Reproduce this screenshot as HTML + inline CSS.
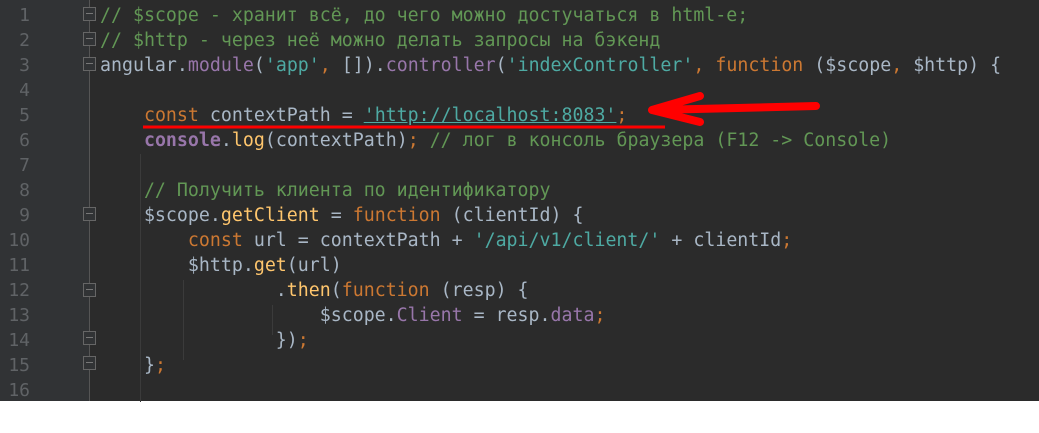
<!DOCTYPE html>
<html><head><meta charset="utf-8"><style>
body{margin:0;width:1039px;height:433px;background:#fff;overflow:hidden;position:relative}
#ed{position:absolute;left:0;top:0;width:1039px;height:401px;background:#2b2b2b}
#gut{position:absolute;left:0;top:0;width:89px;height:401px;background:#313335}
.gl{position:absolute;left:89px;top:0;width:1px;height:401px;background:#555}
.n{position:absolute;left:0;width:30px;text-align:right;color:#606366;font:18px "DejaVu Sans Mono",monospace}
.l{position:absolute;left:100px;white-space:pre;font:18.25px "DejaVu Sans Mono","Liberation Mono",monospace;color:#a9b7c6}
.c{color:#629755}.k{color:#cc7832}.s{color:#4eaaa3}.m{color:#9876aa}.f{color:#ffc66d}
.ig{position:absolute;width:1px;background:#3b3b3b}
.fold{position:absolute;left:83px;width:13px;height:14px;border:1px solid #666;box-sizing:border-box;background:#313335}
.fold:after{content:"";position:absolute;left:2px;top:5px;width:7px;height:1px;background:#777}
</style></head><body>
<div id="ed"></div><div id="gut"></div><div class="gl"></div>
<div class="ig" style="left:140px;top:154px;height:248px"></div>
<div class="ig" style="left:183px;top:280px;height:80px"></div>
<div class="ig" style="left:272px;top:305px;height:30px"></div>
<div class="fold" style="top:7px"></div><div class="fold" style="top:32px"></div><div class="fold" style="top:57px"></div>
<div class="fold" style="top:207px"></div><div class="fold" style="top:283px"></div><div class="fold" style="top:331px"></div><div class="fold" style="top:356px"></div>
<div class="n" style="top:5px">1</div><div class="n" style="top:30px">2</div><div class="n" style="top:55px">3</div><div class="n" style="top:80px">4</div><div class="n" style="top:105px">5</div><div class="n" style="top:130px">6</div><div class="n" style="top:155px">7</div><div class="n" style="top:180px">8</div><div class="n" style="top:205px">9</div><div class="n" style="top:230px">10</div><div class="n" style="top:255px">11</div><div class="n" style="top:280px">12</div><div class="n" style="top:305px">13</div><div class="n" style="top:330px">14</div><div class="n" style="top:355px">15</div><div class="n" style="top:380px">16</div>
<div class="l c" style="top:5px">// $scope - хранит всё, до чего можно достучаться в html-е;</div>
<div class="l c" style="top:30px">// $http - через неё можно делать запросы на бэкенд</div>
<div class="l" style="top:55px">angular.<span class="m">module</span>(<span class="s">'app'</span><span class="k">,</span> []).<span class="m">controller</span>(<span class="s">'indexController'</span><span class="k">,</span> <span class="k">function</span> ($scope<span class="k">,</span> $http) {</div>
<div class="l" style="top:105px">    <span class="k">const</span> contextPath = <span class="s" style="text-decoration:underline">'http://localhost:8083'</span><span class="k">;</span></div>
<div class="l" style="top:130px">    <b class="m">console</b>.<span class="f">log</span>(contextPath)<span class="k">;</span> <span class="c">// лог в консоль браузера (F12 -&gt; Console)</span></div>
<div class="l c" style="top:180px">    // Получить клиента по идентификатору</div>
<div class="l" style="top:205px">    $scope.<span class="f">getClient</span> = <span class="k">function</span> (clientId) {</div>
<div class="l" style="top:230px">        <span class="k">const</span> url = contextPath + <span class="s">'/api/v1/client/'</span> + clientId<span class="k">;</span></div>
<div class="l" style="top:255px">        $http.<span class="f">get</span>(url)</div>
<div class="l" style="top:280px">                .<span class="f">then</span>(<span class="k">function</span> (resp) {</div>
<div class="l" style="top:305px">                    $scope.<span class="m">Client</span> = resp.<span class="m">data</span><span class="k">;</span></div>
<div class="l" style="top:330px">                })<span class="k">;</span></div>
<div class="l" style="top:355px">    }<span class="k">;</span></div>
<svg style="position:absolute;left:0;top:0" width="1039" height="433">
<path d="M143 127 L665 127" stroke="#f00" stroke-width="3" fill="none"/>
<path d="M816 106 L655 110 M700 96 L652 110 L700 122" stroke="#f00" stroke-width="8" stroke-linecap="round" stroke-linejoin="round" fill="none"/>
</svg>
</body></html>
